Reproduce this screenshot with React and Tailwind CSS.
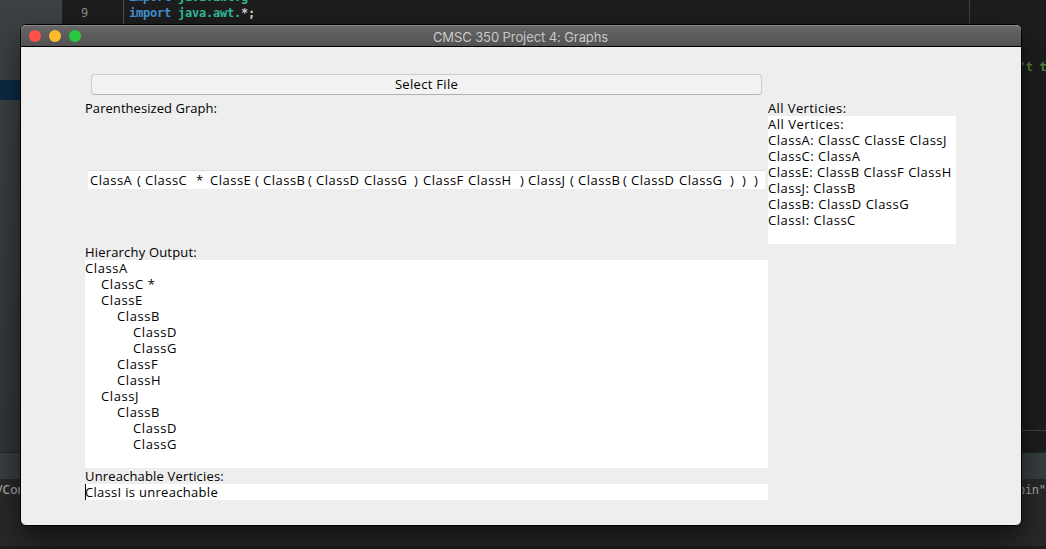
import React from "react";

const tokens = [
  ["ClassA", "w-[47px]"], ["(", "w-[8px]"], ["ClassC", "w-[51px]"], ["*", "w-[14px]"],
  ["ClassE", "w-[45px]"], ["(", "w-[8px]"], ["ClassB", "w-[45px]"], ["(", "w-[8px]"],
  ["ClassD", "w-[48px]"], ["ClassG", "w-[50px]"], [")", "w-[9px]"], ["ClassF", "w-[45px]"],
  ["ClassH", "w-[52px]"], [")", "w-[8px]"], ["ClassJ", "w-[42px]"], ["(", "w-[8px]"],
  ["ClassB", "w-[45px]"], ["(", "w-[8px]"], ["ClassD", "w-[48px]"], ["ClassG", "w-[51px]"],
  [")", "w-[12px]"], [")", "w-[12px]"], [")", "w-[8px]"],
];

const hierarchy = [
  ["ClassA", "pl-0"], ["ClassC *", "pl-4"], ["ClassE", "pl-4"], ["ClassB", "pl-8"],
  ["ClassD", "pl-12"], ["ClassG", "pl-12"], ["ClassF", "pl-8"], ["ClassH", "pl-8"],
  ["ClassJ", "pl-4"], ["ClassB", "pl-8"], ["ClassD", "pl-12"], ["ClassG", "pl-12"],
];

const vertices = [
  "All Vertices:", "ClassA: ClassC ClassE ClassJ", "ClassC: ClassA",
  "ClassE: ClassB ClassF ClassH", "ClassJ: ClassB", "ClassB: ClassD ClassG", "ClassI: ClassC",
];

function Editor() {
  return (
    <div className="flex h-full flex-col font-['DejaVu_Sans_Mono','Liberation_Mono',monospace] text-[12px] leading-4 whitespace-pre">
      <div className="flex h-[452px]">
        <div className="w-[62px] bg-linear-to-b from-[#3c4244] to-[#303436] pt-20">
          <div className="h-5 bg-[#0c2a43]" />
        </div>
        <div className="flex grow justify-between bg-[#1d1d1d]">
          <div className="flex h-[60px] overflow-hidden">
            <div className="w-[62px] border-r border-[#515151] pt-[5px] pl-[19px] text-[#8b8b8b]">9</div>
            <div className="-mt-[11px] pl-[5px] font-bold tracking-[-0.22px]">
              <div className="text-[#4390cf]">import <span className="text-[#2eb99a]">java.awt.g</span></div>
              <div className="text-[#4390cf]">import <span className="text-[#2eb99a]">java.awt.</span><span className="text-[#d0d0d0]">*;</span></div>
            </div>
          </div>
          <div className="flex w-[77px] flex-col border-l border-[#414141]">
            <div className="h-[430px] pt-[59px] pl-[49px] font-bold tracking-[-0.4px] text-[#52843f]">'t t</div>
            <div className="-ml-px h-[22px] border-t border-[#414141] bg-[#1d1d1d]" />
          </div>
        </div>
      </div>
      <div className="h-[27px] border-t border-[#222628] bg-[#373d40]" />
      <div className="flex grow justify-between overflow-hidden bg-[#282828] pt-[3px] text-[#a8a8a8]">
        <span className="-ml-[2px] font-['Noto_Sans',sans-serif] text-[12px] font-medium">/Com</span>
        <span className="w-[28px] tracking-[-0.3px]">bin"</span>
      </div>
      <div className="h-[3px] bg-[#211d1f]" />
    </div>
  );
}

export default function App() {
  return (
    <main className="relative h-[549px] w-[1046px] overflow-hidden bg-[#202020]">
      <Editor />
      <section className="absolute top-6 left-5 flex h-[502px] w-[1002px] flex-col overflow-hidden rounded-[6px] border border-black bg-[#eeeeee] font-['Open_Sans','Noto_Sans',sans-serif] text-[13px] leading-4 font-medium text-black shadow-[0_14px_28px_rgba(0,0,0,0.55)]">
        <header className="relative flex h-[22px] shrink-0 items-center justify-center rounded-t-[5px] border-t border-b border-t-[#858585] border-b-black bg-linear-to-b from-[#666666] to-[#525252]">
          <div className="absolute top-1 left-2 flex gap-2">
            <i className="size-3 rounded-full bg-[#ff5049]" />
            <i className="size-3 rounded-full bg-[#ffba2d]" />
            <i className="size-3 rounded-full bg-[#28c93d]" />
          </div>
          <h1 className="pt-px pr-px font-['Inter',sans-serif] text-[13px] font-normal tracking-[-0.09px] text-[#c8c8c8]">CMSC 350 Project 4: Graphs</h1>
        </header>

        <div className="flex pt-[27px] pl-16 whitespace-pre">
          <div className="flex w-[683px] flex-col">
            <button className="mr-[6px] ml-[6px] h-[21px] rounded-[4px] border border-[#cbcbcb] border-b-[#b1b1b1] bg-[#f2f2f2] pb-px leading-[18px] tracking-[0.3px]">Select File</button>
            <div className="mt-[5px] tracking-[0.05px]">Parenthesized Graph:</div>
            <div className="mt-[54px] mr-[3px] ml-[3px] flex h-[19px] border-t border-[#dddddd] bg-white pt-px pl-[2px] tracking-[0.5px]">
              {tokens.map(([text, width], i) => (
                <span key={i} className={`${width} shrink-0`}>{text}</span>
              ))}
            </div>
            <div className="mt-[55px] tracking-[0.18px]">Hierarchy Output:</div>
            <div className="h-52 bg-white tracking-[0.6px]">
              {hierarchy.map(([text, indent], i) => (
                <div key={i} className={indent}>{text}</div>
              ))}
            </div>
            <div className="tracking-[0.16px]">Unreachable Verticies:</div>
            <div className="relative bg-white tracking-[0.3px]">
              ClassI is unreachable
              <span className="absolute top-0 left-0 h-4 w-px bg-black" />
            </div>
          </div>
          <div className="w-[188px] pt-[26px] tracking-[0.5px]">
            <div className="tracking-[0.4px]">All Verticies:</div>
            <div className="h-32 bg-white">
              {vertices.map((line) => (
                <div key={line}>{line}</div>
              ))}
            </div>
          </div>
        </div>
      </section>
    </main>
  );
}
